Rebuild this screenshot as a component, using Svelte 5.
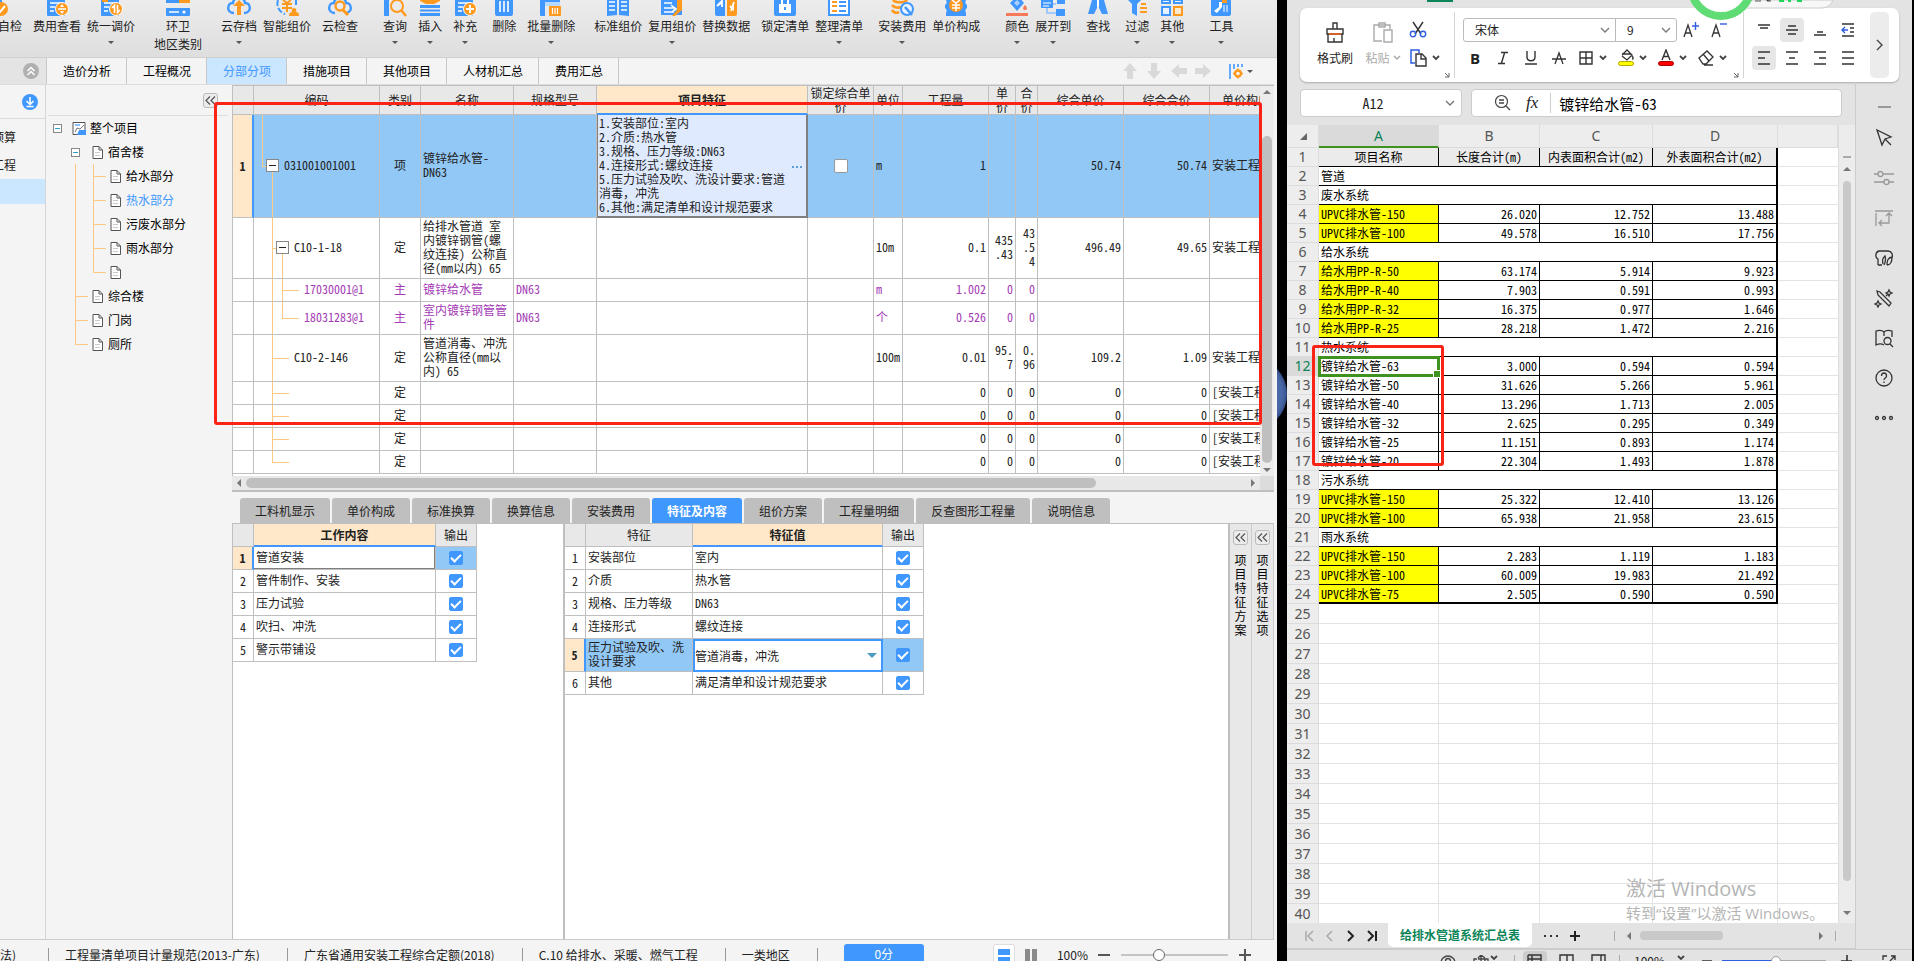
<script lang="ts">
  type Tool = {
    label: string;
    icon: string;
    gap: string;
    menu?: boolean;
    sub?: string;
  };

  const B = "#4098ff";
  const O = "#ff9a1f";

  const page = `<path fill="${B}" d="M2 0h18v15a1 1 0 0 1-1 1H3a1 1 0 0 1-1-1z"/><path stroke="#fff" stroke-width="1.5" d="M5 3h11M5 7h5M5 11h4"/>`;
  const badge = `<circle cx="17" cy="9" r="6.5" fill="${O}" stroke="#fff"/>`;
  const cloud = `<path fill="none" stroke="${B}" stroke-width="2.4" d="M7 13C2 13 0 9 2 5c1-2 3-2 4-2 0-2 1-3 2-4M17 13c5 0 7-4 5-8-1-2-3-2-4-2 0-2-1-3-2-4"/>`;

  const icons: Record<string, string> = {
    check: `<path fill="${B}" d="M0 0h16v15H0z"/><circle cx="15" cy="9" r="7" fill="${O}"/><path fill="none" stroke="#fff" stroke-width="2" d="m11 9 3 3 5-6"/>`,
    cost: `${page}${badge}<path stroke="#fff" stroke-width="1.5" d="M13 9h8"/><path fill="#fff" d="m17 4 2 3h-4zM17 14l2-3h-4z"/>`,
    unify: `${page}<path fill="${O}" d="M3 0h6v2H3z"/>${badge}<path fill="none" stroke="#fff" stroke-width="1.6" d="M15.500 13V5.500L13 8M18.500 5v7.500L21 10"/>`,
    region: `<path fill="${B}" d="M0 0h24v3H0zM0 8h24v7a1 1 0 0 1-1 1H1a1 1 0 0 1-1-1z"/><path fill="${O}" d="M13 0h11v3H13z"/><path stroke="#fff" stroke-width="1.500" d="M3 12h10"/><circle cx="18" cy="12" r="1.600" fill="#fff"/>`,
    cloudUp: `${cloud}<path fill="${O}" d="m12 0 6 6h-4v9h-4V6H6z"/>`,
    smart: `<path fill="none" stroke="${B}" stroke-width="2" stroke-dasharray="6 2" d="M3 0c-2 6 1 12 7 14M21 0v5"/><path fill="none" stroke="${O}" stroke-width="2" d="m8 0 4 3 4-3M12 2v10M7 4h10M7 8h10"/><path fill="${O}" d="M14 16c0-3 1-4 3-4-1-2 0-4 2-4s3 2 2 4c2 0 3 1 3 4z"/>`,
    cloudFind: `${cloud}<circle cx="12" cy="6" r="4.500" fill="none" stroke="${O}" stroke-width="2.400"/><path stroke="${O}" stroke-width="3" d="m15 10 5 5"/>`,
    query: `<path fill="${B}" d="M1 0h5v16H1z"/><circle cx="14" cy="6" r="6" fill="none" stroke="${O}" stroke-width="2"/><path stroke="${O}" stroke-width="2.500" d="m18 10 5 6"/>`,
    insert: `<path fill="${O}" d="M2 0h20v1l-6 3H8L2 1z"/><path stroke="${B}" stroke-width="3" d="M2 6.500h20M2 14.500h20"/><path stroke="${B}" stroke-width="2" d="M2 10.500h20"/>`,
    supply: `${page}${badge}<path stroke="#fff" stroke-width="1.800" d="M17 5v8M13 9h8"/>`,
    remove: `<path fill="${B}" d="M3 0h18v14a2 2 0 0 1-2 2H5a2 2 0 0 1-2-2z"/><path stroke="#fff" stroke-width="1.600" d="M8 1v11M12 1v11M16 1v11"/>`,
    removeAll: `<path fill="${B}" d="M1 0h20v2H6v14H2a1 1 0 0 1-1-1z"/><path fill="#b7d8ff" d="M6 2h15v4H6z"/><path fill="${O}" d="M10 6h12v9a1 1 0 0 1-1 1H11a1 1 0 0 1-1-1z"/><path stroke="#fff" stroke-width="1.200" d="M13.500 8v6M16 8v6M18.500 8v6"/>`,
    standard: `<path fill="${B}" d="M1 0h10v15l-10 1zM13 0h10v16l-10-1z"/><path stroke="#fff" stroke-width="1.300" d="M3 2h6M3 6h6M3 10h6M15 2h6M15 6h6M15 10h6"/>`,
    reuse: `<path fill="${B}" d="M1 0h16v4l5 5v6H2a1 1 0 0 1-1-1z"/><path fill="${O}" d="M17 0h5v10l-7 6h-3l5-6z"/><path fill="none" stroke="#fff" stroke-width="1.600" d="M4 3h8M4 12h10M11 5l5 4-4 3M4 8h11"/>`,
    swap: `<path fill="${B}" d="M1 0h10v16H3a2 2 0 0 1-2-2z"/><path fill="${O}" d="M13 0h10v14a2 2 0 0 1-2 2h-8z"/><path fill="none" stroke="#fff" stroke-width="1.800" d="m5 5 3-4v6M3 6l5-5M19 4v5l-3-3M20 2l-3 9"/>`,
    lock: `<path fill="${B}" d="M1 0h22v14a2 2 0 0 1-2 2H3a2 2 0 0 1-2-2z"/><path fill="#fff" d="M6 4h12v9H6z"/><path fill="none" stroke="#fff" stroke-width="2" d="M9 4V0M15 4V0"/><path stroke="${B}" stroke-width="2" d="M12 7v3"/>`,
    tidy: `<path fill="#fff" stroke="${B}" stroke-width="2" d="M2 0v15h20V0"/><path stroke="${O}" stroke-width="2" d="M5 2h5M5 6h5M5 11h5"/><path stroke="${B}" stroke-width="2" d="M12 2h7M12 6h7M12 11h7"/>`,
    install: `<path fill="none" stroke="${O}" stroke-width="2.600" d="M3 0c2 3 12 3 14 0M2 5c2 3 7 3 9 2M2 10c2 3 5 3 7 2"/><circle cx="17" cy="9" r="6" fill="#e6f2ff" stroke="${B}" stroke-width="2"/><path stroke="${B}" stroke-width="2.600" d="m15 7 7 8"/>`,
    compose: `<path fill="${B}" d="M1 5c2-1 2-3 1-5h20c-1 2-1 4 1 5v3c-2 1-2 3-1 5v3H2v-3c1-2 1-4-1-5z"/><circle cx="12" cy="5" r="7" fill="${O}"/><path fill="none" stroke="#fff" stroke-width="1.500" d="m8 0 4 3 4-3M12 3v8M8 5h8M8 8h8"/>`,
    color: `<path fill="#f7795b" d="M1 13h22v3H1z"/><path fill="${B}" d="M5 3 10-2h5l4 5-7 8z"/><path fill="#a7d0ff" d="m9 3 3-3 3 3-3 3z"/><path fill="#f7795b" d="M20 5c3 3 2 5 0 5s-3-2 0-5z"/>`,
    expand: `<path fill="${B}" d="M0 0h12v8H0zM16 0h8v4h-8zM15 9h9v7h-9z"/><path fill="none" stroke="#8cc0ff" stroke-width="1.600" d="M12 4h3M6 8v5h9"/><path stroke="#fff" d="M2 3h8M2 6h6"/>`,
    find: `<path fill="${B}" d="M6 0h5v8l-3 6H2zM13 0h5l4 14h-6l-3-6z"/><path fill="#fff" d="M11 0h2v6h-2z"/>`,
    filter: `<path fill="${B}" d="M3 0h13l-4 4v12l-5-3V4z"/><path stroke="${O}" stroke-width="2" d="M16 4h5M15 8h7M15 12h7"/>`,
    other: `<path fill="#e6f2ff" stroke="${B}" stroke-width="2" d="M2 0h8v3H2zM2 7h8v8H2zM14 0h8v3h-8z"/><path fill="#ffe9cd" stroke="${O}" stroke-width="2" d="M14 7h8v8h-8z"/>`,
    kit: `<path fill="${B}" d="M2 0h20v14a2 2 0 0 1-2 2H4a2 2 0 0 1-2-2z"/><path fill="#fff" d="M10 2h3v5l-5 6-3-2 5-4z"/><path fill="${O}" d="M13 0h5v3h-5z"/><path stroke="#fff" d="M15 5v7M18 5v7"/>`,
  };

  const tools: Tool[] = [
    { label: "项目自检", icon: "check", gap: "none" },
    { label: "费用查看", icon: "cost", gap: "gap-m" },
    { label: "统一调价", icon: "unify", gap: "gap-s", menu: true },
    { label: "环卫", sub: "地区类别", icon: "region", gap: "gap-xl" },
    { label: "云存档", icon: "cloudUp", gap: "gap-xl", menu: true },
    { label: "智能组价", icon: "smart", gap: "gap-s" },
    { label: "云检查", icon: "cloudFind", gap: "gap-m" },
    { label: "查询", icon: "query", gap: "gap-xxl", menu: true },
    { label: "插入", icon: "insert", gap: "gap-m", menu: true },
    { label: "补充", icon: "supply", gap: "gap-m", menu: true },
    { label: "删除", icon: "remove", gap: "gap-l" },
    { label: "批量删除", icon: "removeAll", gap: "gap-m", menu: true },
    { label: "标准组价", icon: "standard", gap: "gap-xl" },
    { label: "复用组价", icon: "reuse", gap: "gap-s", menu: true },
    { label: "替换数据", icon: "swap", gap: "gap-s" },
    { label: "锁定清单", icon: "lock", gap: "gap-m" },
    { label: "整理清单", icon: "tidy", gap: "gap-s", menu: true },
    { label: "安装费用", icon: "install", gap: "gap-l", menu: true },
    { label: "单价构成", icon: "compose", gap: "gap-s" },
    { label: "颜色", icon: "color", gap: "gap-xxl", menu: true },
    { label: "展开到", icon: "expand", gap: "gap-s", menu: true },
    { label: "查找", icon: "find", gap: "gap-l" },
    { label: "过滤", icon: "filter", gap: "gap-l", menu: true },
    { label: "其他", icon: "other", gap: "gap-m", menu: true },
    { label: "工具", icon: "kit", gap: "gap-xxl", menu: true },
  ];

  const mainTabs = ["造价分析", "工程概况", "分部分项", "措施项目", "其他项目", "人材机汇总", "费用汇总"];
  const moveArrows = [
    "M7 0l7 8h-4v8H4V8H0z",
    "M7 16l7-8h-4V0H4v8H0z",
    "M0 8l8-7v4h8v6H8v4z",
    "M16 8L8 1v4H0v6h8v4z",
  ];

  const treeLeaves = ["给水部分", "热水部分", "污废水部分", "雨水部分", ""];
  const treeSiblings = ["综合楼", "门岗", "厕所"];

  const billHead = ["", "编码", "类别", "名称", "规格型号", "项目特征", "锁定综合单\n价", "单位", "工程量", "单\n价", "合\n价", "综合单价", "综合合价", "单价构成"];
  const billCols = [21, 126, 41, 93, 83, 211, 66, 29, 86, 27, 22, 86, 86, 86];

  const feature =
    "1.安装部位:室内\n2.介质:热水管\n3.规格、压力等级:DN63\n4.连接形式:螺纹连接\n5.压力试验及吹、洗设计要求:管道\n消毒，冲洗\n6.其他:满足清单和设计规范要求";

  // guides: [x, "top" | "bottom" | "full"], hook: [x, width]
  type Row = {
    kind: string;
    level: number;
    code: string;
    box?: boolean;
    guides: [number, string][];
    hook: [number, number];
    cells: string[];
  };
  const blank: string[] = ["定", "", "", "", "", "", "0", "0", "0", "0", "0", "[安装工程]"];
  const rows: Row[] = [
    { kind: "current", level: 1, code: "031001001001", box: true, guides: [[8, "top"], [18, "bottom"]], hook: [8, 5], cells: ["项", "镀锌给水管-\nDN63", "", feature, "", "m", "1", "", "", "50.74", "50.74", "安装工程"] },
    { kind: "", level: 2, code: "C10-1-18", box: true, guides: [[18, "full"], [28, "bottom"]], hook: [18, 5], cells: ["定", "给排水管道 室\n内镀锌钢管(螺\n纹连接) 公称直\n径(mm以内) 65", "", "", "", "10m", "0.1", "435\n.43", "43\n.5\n4", "496.49", "49.65", "安装工程"] },
    { kind: "material", level: 3, code: "17030001@1", guides: [[18, "full"], [28, "full"]], hook: [28, 17], cells: ["主", "镀锌给水管", "DN63", "", "", "m", "1.002", "0", "0", "", "", ""] },
    { kind: "material", level: 3, code: "18031283@1", guides: [[18, "full"], [28, "top"]], hook: [28, 17], cells: ["主", "室内镀锌钢管管\n件", "DN63", "", "", "个", "0.526", "0", "0", "", "", ""] },
    { kind: "", level: 2, code: "C10-2-146", guides: [[18, "full"]], hook: [18, 17], cells: ["定", "管道消毒、冲洗\n公称直径(mm以\n内) 65", "", "", "", "100m", "0.01", "95.\n7", "0.\n96", "109.2", "1.09", "安装工程"] },
    { kind: "", level: 2, code: "", guides: [[18, "full"]], hook: [18, 17], cells: blank },
    { kind: "", level: 2, code: "", guides: [[18, "full"]], hook: [18, 17], cells: blank },
    { kind: "", level: 2, code: "", guides: [[18, "full"]], hook: [18, 17], cells: blank },
    { kind: "", level: 2, code: "", guides: [[18, "top"]], hook: [18, 17], cells: blank },
  ];

  const cellClass = (i: number) => (i === 0 ? "mid" : i >= 6 && i <= 10 ? "num" : "");

  const detailTabs = ["工料机显示", "单价构成", "标准换算", "换算信息", "安装费用", "特征及内容", "组价方案", "工程量明细", "反查图形工程量", "说明信息"];
  const works = ["管道安装", "管件制作、安装", "压力试验", "吹扫、冲洗", "警示带铺设"];
  const features = [
    ["安装部位", "室内"],
    ["介质", "热水管"],
    ["规格、压力等级", "DN63"],
    ["连接形式", "螺纹连接"],
    ["压力试验及吹、洗\n设计要求", "管道消毒，冲洗"],
    ["其他", "满足清单和设计规范要求"],
  ];
  const drawers = ["项目特征方案", "项目特征选项"];
  const statusItems = ["工程量清单项目计量规范(2013-广东)", "广东省通用安装工程综合定额(2018)", "C.10 给排水、采暖、燃气工程", "一类地区"];

  const sheet: string[][] = [
    ["项目名称", "长度合计(m)", "内表面积合计(m2)", "外表面积合计(m2)"],
    ["管道"],
    ["废水系统"],
    ["UPVC排水管-150", "26.020", "12.752", "13.488"],
    ["UPVC排水管-100", "49.578", "16.510", "17.756"],
    ["给水系统"],
    ["给水用PP-R-50", "63.174", "5.914", "9.923"],
    ["给水用PP-R-40", "7.903", "0.591", "0.993"],
    ["给水用PP-R-32", "16.375", "0.977", "1.646"],
    ["给水用PP-R-25", "28.218", "1.472", "2.216"],
    ["热水系统"],
    ["镀锌给水管-63", "3.000", "0.594", "0.594"],
    ["镀锌给水管-50", "31.626", "5.266", "5.961"],
    ["镀锌给水管-40", "13.296", "1.713", "2.005"],
    ["镀锌给水管-32", "2.625", "0.295", "0.349"],
    ["镀锌给水管-25", "11.151", "0.893", "1.174"],
    ["镀锌给水管-20", "22.304", "1.493", "1.878"],
    ["污水系统"],
    ["UPVC排水管-150", "25.322", "12.410", "13.126"],
    ["UPVC排水管-100", "65.938", "21.958", "23.615"],
    ["雨水系统"],
    ["UPVC排水管-150", "2.283", "1.119", "1.183"],
    ["UPVC排水管-100", "60.009", "19.983", "21.492"],
    ["UPVC排水管-75", "2.505", "0.590", "0.590"],
  ];
  const emptyRows = Array.from({ length: 16 }, (_, i) => i + 25);
  const isMarked = (i: number, row: string[]) => i > 0 && row.length > 1 && !row[0].startsWith("镀锌");

  const railIcons = [
    { name: "选择", soft: false, d: "M3 2l5 15 3-6 6-2zM11 11l6 6" },
    { name: "属性", soft: true, d: "M0 6h4M9 6h11M0 14h10M15 14h5M4 6a2.500 2.500 0 1 0 5 0a2.500 2.500 0 1 0-5 0M10 14a2.500 2.500 0 1 0 5 0a2.500 2.500 0 1 0-5 0" },
    { name: "裁剪", soft: true, d: "M1 3h18M2 5v13M15 6v9H6M12 8l3-3 3 3M8 12l-3 3 3 3" },
    { name: "分析", soft: false, d: "M4 17V11C1 10 1 4 5 3h9c4 0 5 4 4 7M4 17h4M9 16c-1-5 0-6 2-8 1 3 1 5-1 9M13 17c0-5 1-7 5-8 0 4-1 8-5 8" },
    { name: "工具", soft: false, d: "M3 3l3 1 11 11-2 3L4 7zM15 2l1 2 2 1-2 1-1 2-1-2-2-1 2-1zM4 13l1 2 2 1-2 1-1 2-1-2-2-1 2-1zM12 8l2-2" },
    { name: "查找", soft: false, d: "M10 17c-3-2-6-1-8 0V3c3-1 6-1 8 1 2-2 5-2 8-1v6M10 4v4M17 13a3.500 3.500 0 1 0-7 0a3.500 3.500 0 1 0 7 0M16 16l3 3" },
    { name: "帮助", soft: false, d: "M18 10a8 8 0 1 0-16 0a8 8 0 1 0 16 0M7.500 8c0-4 5-4 5 0 0 2-2.500 2-2.500 4M10 13.500v1.500" },
    { name: "更多", soft: false, d: "M4.500 10a1.500 1.500 0 1 0-3 0a1.500 1.500 0 1 0 3 0M11.500 10a1.500 1.500 0 1 0-3 0a1.500 1.500 0 1 0 3 0M18.500 10a1.500 1.500 0 1 0-3 0a1.500 1.500 0 1 0 3 0" },
  ];
  const alignTop = [
    { name: "顶端对齐", on: false, d: "M4 5h12M6 8h8" },
    { name: "垂直居中", on: true, d: "M6 6h8M4 10h12M6 14h8" },
    { name: "底端对齐", on: false, d: "M7 12h6M4 15h12" },
  ];
  const alignBottom = [
    { name: "左对齐", on: true, d: "M4 4h12M4 10h7M4 16h12" },
    { name: "水平居中", on: false, d: "M4 4h12M7 10h6M4 16h12" },
    { name: "右对齐", on: false, d: "M4 4h12M9 10h7M4 16h12" },
    { name: "两端对齐", on: false, d: "M4 4h12M4 10h12M4 16h12" },
  ];
</script>

{#snippet doc()}
  <svg class="doc" width="11" height="13" viewBox="0 0 11 13">
    <path d="M1 .5h6l3.500 3.500v8.500H1z" fill="#fff" stroke="#555" />
    <path d="M7 .5V4h3.500" fill="none" stroke="#555" />
    <path d="M3 6.500h5M3 9.500h5" stroke="#c8c8c8" />
  </svg>
{/snippet}

{#snippet chevron()}
  <svg class="chev" width="10" height="6" viewBox="0 0 10 6"><path d="M1 1l4 4 4-4" fill="none" stroke="#777" stroke-width="1.300" /></svg>
{/snippet}

{#snippet doubleLeft()}
  <svg width="11" height="9" viewBox="0 0 11 9"><path d="M5 .5l-4 4 4 4M10 .5l-4 4 4 4" fill="none" stroke="#555" stroke-width="1.200" /></svg>
{/snippet}

{#snippet smallCaret()}
  <svg width="8" height="6" viewBox="0 0 8 6"><path d="M1 1l3 3 3-3" fill="none" stroke="#444" stroke-width="1.800" /></svg>
{/snippet}

<!-- keeps the comma at full width inside half-width text -->
{#snippet wide(text: string)}{#each text.split("，") as part, i}{#if i > 0}<span class="full-width">，</span>{/if}{part}{/each}{/snippet}

<div class="desktop">
  <div class="suite">
    <div class="toolbar">
      {#each tools as tool}
        <button class="tool {tool.gap}">
          <svg width="24" height="17" viewBox="0 0 24 17">{@html icons[tool.icon]}</svg>
          <span>{tool.label}</span>
          {#if tool.sub}<span>{tool.sub}</span>{/if}
          {#if tool.menu}<i class="caret"></i>{/if}
        </button>
      {/each}
    </div>

    <div class="main-tabs">
      <div class="fold">
        <button aria-label="收起">
          <svg width="16" height="16" viewBox="0 0 16 16"><circle cx="8" cy="8" r="8" fill="#b0b0b0" /><path d="M4.500 8L8 4.500 11.500 8M4.500 12L8 8.500l3.500 3.500" fill="none" stroke="#fff" stroke-width="1.500" /></svg>
        </button>
      </div>
      {#each mainTabs as tab}
        <button class="main-tab" class:active={tab === "分部分项"}>{tab}</button>
      {/each}
      <div class="moves">
        {#each moveArrows as d}
          <svg width="16" height="16" viewBox="0 0 16 16"><path {d} fill="#d9d9d9" /></svg>
        {/each}
      </div>
      <button class="config" aria-label="设置">
        <svg width="14" height="15" viewBox="0 0 14 15">
          <path d="M1 0v15M5 0v5M9 0v3M13 0v3" stroke="#4098ff" stroke-width="1.600" />
          <circle cx="9" cy="9.500" r="3" fill="none" stroke="#ff9a1f" stroke-width="2.400" />
          <path d="M9 4.500v10M4 9.500h10" stroke="#ff9a1f" stroke-width="1.600" stroke-dasharray="2 6" />
        </svg>
        <i class="caret"></i>
      </button>
    </div>

    <div class="workspace">
      <aside class="strip">
        <div class="strip-top">
          <svg width="16" height="16" viewBox="0 0 16 16"><circle cx="8" cy="8" r="8" fill="#4098ff" /><path d="M8 3v7M4.500 7L8 10.500 11.500 7M4.500 12.500h7" fill="none" stroke="#fff" stroke-width="1.500" /></svg>
        </div>
        <p>预算</p>
        <p>工程</p>
        <p class="picked"></p>
      </aside>

      <nav class="project">
        <div class="project-top"><button class="collapse" aria-label="折叠">{@render doubleLeft()}</button></div>
        <div class="node root">
          <i class="toggle"></i>
          <svg width="14" height="13" viewBox="0 0 14 13"><path d="M1 .5h12v12H1z" fill="#fff" stroke="#555" /><path d="M3 3h5" stroke="#8cc0ff" stroke-width="2" /><path d="M3 10l2-4 3 1 4-4" fill="none" stroke="#777" /><path d="M7 8h7v5H5z" fill="#4098ff" /></svg>
          <span>整个项目</span>
        </div>
        <div class="node level-one">
          <i class="toggle"></i>
          {@render doc()}
          <span>宿舍楼</span>
        </div>
        <div class="branch outer">
          <div class="branch inner">
            {#each treeLeaves as leaf}
              <div class="node leaf" class:chosen={leaf === "热水部分"}>
                {@render doc()}
                <span>{leaf}</span>
              </div>
            {/each}
          </div>
          {#each treeSiblings as name}
            <div class="node leaf">
              {@render doc()}
              <span>{name}</span>
            </div>
          {/each}
        </div>
      </nav>

      <main class="content">
        <section class="bill">
          <div class="bill-view">
            <table class="grid bill-grid">
              <colgroup>
                {#each billCols as w}<col style="width: {w}px" />{/each}
              </colgroup>
              <thead>
                <tr>
                  {#each billHead as h}
                    <th class:hot={h === "项目特征"}>{h}</th>
                  {/each}
                </tr>
              </thead>
              <tbody>
                {#each rows as row, r}
                  <tr class={row.kind}>
                    <td class="index">{r === 0 ? "1" : ""}</td>
                    <td class="code level-{row.level}">
                      {#each row.guides as [x, part]}
                        <i class="guide {part}" style="left: {x}px"></i>
                      {/each}
                      <i class="hook" style="left: {row.hook[0]}px; width: {row.hook[1]}px"></i>
                      {#if row.box}<i class="minus" style="left: {row.hook[0] + 4}px"></i>{/if}
                      {row.code}
                    </td>
                    {#each row.cells as cell, i}
                      <td class={cellClass(i)} class:feature={r === 0 && i === 3} class:mid={i === 0 || (r === 0 && i === 4)}>
                        {#if r === 0 && i === 4}
                          <input type="checkbox" class="check" aria-label="锁定综合单价" />
                        {:else}{@render wide(cell)}{/if}{#if r === 0 && i === 3}<button class="more" aria-label="编辑特征"><i></i><i></i><i></i></button>{/if}
                      </td>
                    {/each}
                  </tr>
                {/each}
              </tbody>
            </table>
          </div>
          <div class="vbar">
            <i class="arrow up"></i>
            <i class="thumb"></i>
            <i class="arrow down"></i>
          </div>
          <div class="marker bill-marker"></div>
        </section>
        <div class="hbar">
          <i class="arrow left"></i>
          <div class="track"><i class="thumb"></i></div>
          <i class="arrow right"></i>
          <i class="corner"></i>
        </div>

        <div class="detail-tabs">
          {#each detailTabs as tab}
            <button class="detail-tab" class:active={tab === "特征及内容"}>{tab}</button>
          {/each}
        </div>

        <section class="detail">
          <div class="works">
            <table class="grid">
              <colgroup><col class="w-index" /><col class="w-work" /><col class="w-out" /></colgroup>
              <thead><tr><th></th><th class="hot">工作内容</th><th>输出</th></tr></thead>
              <tbody>
                {#each works as work, i}
                  <tr class:current={i === 0}>
                    <td class="index">{i + 1}</td>
                    <td class:focus={i === 0}>{work}</td>
                    <td class="mid"><input type="checkbox" class="check" checked aria-label={work} /></td>
                  </tr>
                {/each}
              </tbody>
            </table>
          </div>
          <div class="values">
            <table class="grid">
              <colgroup><col class="w-index" /><col class="w-name" /><col class="w-value" /><col class="w-out" /></colgroup>
              <thead><tr><th></th><th>特征</th><th class="hot">特征值</th><th>输出</th></tr></thead>
              <tbody>
                {#each features as [name, value], i}
                  <tr class:current={i === 4}>
                    <td class="index">{i + 1}</td>
                    <td>{name}</td>
                    {#if i === 4}
                      <td class="editing">
                        <div class="picker">
                          <select aria-label={name}><option>{value}</option></select>
                          <i></i>
                        </div>
                      </td>
                    {:else}
                      <td>{value}</td>
                    {/if}
                    <td class="mid"><input type="checkbox" class="check" checked aria-label={name} /></td>
                  </tr>
                {/each}
              </tbody>
            </table>
          </div>
          {#each drawers as drawer}
            <div class="drawer">
              <button class="collapse" aria-label="展开{drawer}">{@render doubleLeft()}</button>
              <span>{drawer}</span>
            </div>
          {/each}
        </section>
      </main>
    </div>

    <footer class="status">
      <span class="first">法)</span>
      {#each statusItems as item}<span>{item}</span>{/each}
      <button class="score">0分</button>
      <svg class="views" width="46" height="17" viewBox="0 0 46 17">
        <rect x=".5" y=".5" width="21" height="24" rx="2" fill="#fff" stroke="#ddd" />
        <path d="M5 5h12v6H5zM5 13h12v7H5z" fill="#4098ff" />
        <path d="M32 5h5v15h-5zM39 5h5v15h-5z" fill="#8a8a8a" />
      </svg>
      <b class="percent">100%</b>
      <svg width="154" height="18" viewBox="0 0 154 18">
        <path d="M0 12h12M141 12h12M147 6v12" stroke="#555" stroke-width="2" />
        <path d="M23 12h107" stroke="#c4c4c4" stroke-width="2" />
        <circle cx="61" cy="12" r="5.500" fill="#fff" stroke="#666" />
      </svg>
    </footer>
  </div>

  <div class="gutter"><i></i></div>

  <div class="office">
    <div class="overlay">
      <i class="green-tab"></i>
      <svg class="speed" width="150" height="24" viewBox="0 0 150 24">
        <path d="M30 0h116c-2 5-6 8-12 8H30z" fill="#f7f7f7" stroke="#ccc" />
        <path d="M64 0v1M68 1h6M80 0v1h4" stroke="#555" />
        <path d="M92 1h5M101 1h3M110 1h5" stroke="#1fd65a" stroke-width="2" />
        <circle cx="34" cy="-14" r="30" fill="#fff" stroke="#5fdc74" stroke-width="8" />
      </svg>
    </div>

    <div class="ribbon">
      <div class="clip">
        <button class="big">
          <svg width="20" height="22" viewBox="0 0 20 22"><path d="M8 8V2h4v6M2 8h16v5H2zM3 13v8h14v-8M9 17v4" fill="none" stroke="#333" stroke-width="1.400" /><path d="M4 13h12" stroke="#d2622a" stroke-width="2" /></svg>
          <span>格式刷</span>
        </button>
        <button class="big soft">
          <svg width="20" height="22" viewBox="0 0 20 22"><path d="M9 20H1V4h16v4M6 6V2h6v4zM11 9h8v12h-8z" fill="none" stroke="#aaa" stroke-width="1.400" /></svg>
          <span>粘贴 <svg width="8" height="6" viewBox="0 0 8 6"><path d="M1 1l3 3 3-3" fill="none" stroke="#aaa" stroke-width="1.500" /></svg></span>
        </button>
        <div class="pair">
          <button aria-label="剪切"><svg width="18" height="18" viewBox="0 0 18 18"><path d="M4 1l8 12M14 1L6 13" fill="none" stroke="#333" stroke-width="1.400" /><g fill="none" stroke="#2f5fe0" stroke-width="1.400"><circle cx="4" cy="13" r="2.700" /><circle cx="14" cy="13" r="2.700" /></g></svg></button>
          <button aria-label="复制"><svg width="18" height="18" viewBox="0 0 18 18"><path d="M6 14H2V1h8v3" fill="none" stroke="#2f5fe0" stroke-width="1.500" /><path d="M7 5h6l4 4v8H7zM12 5v5h5" fill="none" stroke="#333" stroke-width="1.400" /></svg>{@render smallCaret()}</button>
        </div>
        <svg class="launch" width="6" height="6" viewBox="0 0 6 6"><path d="M1 1l4 4M5 1v4H1" fill="none" stroke="#666" /></svg>
      </div>

      <div class="font">
        <div class="line">
          <div class="combo">
            <select class="family" aria-label="字体"><option>宋体</option></select>{@render chevron()}
          </div>
          <div class="combo size">
            <select aria-label="字号"><option>9</option></select>{@render chevron()}
          </div>
          <button class="step" aria-label="增大字号"><svg width="18" height="18" viewBox="0 0 18 18"><path d="M2 16L6 4l4 12M3.500 12h5" fill="none" stroke="#333" stroke-width="1.300" /><path d="M13.500 1v8M10 5h7" stroke="#2f5fe0" stroke-width="1.400" /></svg></button>
          <button class="step" aria-label="减小字号"><svg width="18" height="18" viewBox="0 0 18 18"><path d="M2 16L6 4l4 12M3.500 12h5" fill="none" stroke="#333" stroke-width="1.300" /><path d="M10 3h7" stroke="#2f5fe0" stroke-width="1.400" /></svg></button>
        </div>
        <div class="line">
          <button class="glyph bold">B</button>
          <button class="glyph" aria-label="倾斜"><svg width="14" height="14" viewBox="0 0 14 14"><path d="M5 1.500h7M2 12.500h7M8.500 2L5.500 12" stroke="#333" stroke-width="1.400" /></svg></button>
          <button class="glyph" aria-label="下划线"><svg width="14" height="14" viewBox="0 0 14 14"><path d="M3 0v6c0 5 8 5 8 0V0M1 13h12" fill="none" stroke="#333" stroke-width="1.400" /></svg></button>
          <button class="glyph" aria-label="删除线"><svg width="14" height="14" viewBox="0 0 14 14"><path d="M3 13L7 2l4 11M0 8h14" fill="none" stroke="#333" stroke-width="1.300" /></svg></button>
          <button class="split" aria-label="边框"><svg width="26" height="16" viewBox="0 0 26 16"><path d="M7 2h12v12H7zM13 2v12M7 8h12" fill="none" stroke="#333" stroke-width="1.400" /></svg>{@render smallCaret()}</button>
          <button class="split" aria-label="填充颜色"><svg width="26" height="18" viewBox="0 0 26 18"><path d="M9 6l5-5 5 5-5 5-5-4M9 5h9M19 7c2 2 1 3 0 3" fill="none" stroke="#333" stroke-width="1.300" /><rect x="5.500" y="12.500" width="15" height="4" rx="2" fill="#ff0" stroke="#b8a800" /></svg>{@render smallCaret()}</button>
          <button class="split" aria-label="字体颜色"><svg width="26" height="18" viewBox="0 0 26 18"><path d="M9 11l4-10 4 10M10.500 7.500h5" fill="none" stroke="#333" stroke-width="1.400" /><rect x="5.500" y="12.500" width="15" height="4" rx="2" fill="#f00" stroke="#a00" /></svg>{@render smallCaret()}</button>
          <button class="split" aria-label="清除"><svg width="26" height="18" viewBox="0 0 26 18"><path d="M6 9l8-7 6 6-7 7h-3zM10 5l6 7M11 16h9" fill="none" stroke="#333" stroke-width="1.300" /></svg>{@render smallCaret()}</button>
        </div>
        <svg class="launch" width="6" height="6" viewBox="0 0 6 6"><path d="M1 1l4 4M5 1v4H1" fill="none" stroke="#666" /></svg>
      </div>

      <div class="align">
        <div class="line">
          {#each alignTop as a}
            <button class:on={a.on} aria-label={a.name}><svg width="20" height="20" viewBox="0 0 20 20"><path d={a.d} stroke="#333" stroke-width="1.400" /></svg></button>
          {/each}
          <button aria-label="减少缩进"><svg width="20" height="20" viewBox="0 0 20 20"><path d="M4 4h12M12 8h4M12 12h4M4 16h12" stroke="#333" stroke-width="1.400" /><path d="M10 10H4M7 7l-3 3 3 3" fill="none" stroke="#2f5fe0" stroke-width="1.400" /></svg></button>
        </div>
        <div class="line">
          {#each alignBottom as a}
            <button class:on={a.on} aria-label={a.name}><svg width="20" height="20" viewBox="0 0 20 20"><path d={a.d} stroke="#333" stroke-width="1.400" /></svg></button>
          {/each}
        </div>
      </div>
      <button class="next" aria-label="更多"><svg width="8" height="14" viewBox="0 0 8 14"><path d="M1 2l5 5-5 5" fill="none" stroke="#444" stroke-width="1.400" /></svg></button>
    </div>

    <div class="book">
      <div class="book-main">
        <div class="formula-row">
          <div class="name-box">
            <input aria-label="名称框" value="A12" />
            {@render chevron()}
          </div>
          <div class="formula">
            <svg width="18" height="18" viewBox="0 0 18 18"><circle cx="7.500" cy="7.500" r="6" fill="none" stroke="#444" stroke-width="1.200" /><path d="M12 12l4 4M5 6h5M5 9h5" stroke="#444" stroke-width="1.300" /></svg>
            <em>fx</em>
            <input aria-label="编辑栏" value="镀锌给水管-63" />
          </div>
        </div>

        <div class="sheet-wrap">
          <div class="sheet-view">
            <table class="sheet">
              <colgroup><col class="c-head" /><col class="c-a" /><col class="c-b" /><col class="c-c" /><col class="c-d" /><col /></colgroup>
              <thead>
                <tr><th class="all"><i></i></th><th class="picked">A</th><th>B</th><th>C</th><th>D</th><th></th></tr>
              </thead>
              <tbody>
                {#each sheet as row, i}
                  <tr class:title={i === 0} class:last={i === sheet.length - 1}>
                    <th class:picked={i === 11}>{i + 1}</th>
                    {#if row.length === 1}
                      <td class="data edge" colspan="4">{row[0]}</td>
                    {:else}
                      {#each row as cell, c}
                        <td class="data" class:num={i > 0 && c > 0} class:edge={c === 3} class:yellow={c === 0 && isMarked(i, row)} class:cursor={i === 11 && c === 0}>{cell}</td>
                      {/each}
                    {/if}
                    <td></td>
                  </tr>
                {/each}
                {#each emptyRows as n}
                  <tr class="spare"><th>{n}</th><td></td><td></td><td></td><td></td><td></td></tr>
                {/each}
              </tbody>
            </table>
          </div>
          <div class="sheet-bar">
            <i class="dash"></i>
            <i class="arrow up"></i>
            <i class="thumb"></i>
            <i class="arrow down"></i>
          </div>
          <div class="marker sheet-marker"></div>
          <div class="watermark">
            <p>激活 Windows</p>
            <p>转到“设置”以激活 Windows。</p>
          </div>
        </div>

        <div class="sheet-tabs">
          <svg width="84" height="14" viewBox="0 0 84 14">
            <path d="M2 2v10M9 2L4 7l5 5M28 2l-5 5 5 5" fill="none" stroke="#aaa" stroke-width="1.500" />
            <path d="M44 2l5 5-5 5M64 2l5 5-5 5M72 2v10" fill="none" stroke="#222" stroke-width="2" />
          </svg>
          <button class="sheet-tab">给排水管道系统汇总表</button>
          <button class="dots" aria-label="更多工作表"><svg width="14" height="2" viewBox="0 0 14 2"><path d="M0 1h2M6 1h2M12 1h2" stroke="#333" stroke-width="2" /></svg></button>
          <button class="plus" aria-label="新建工作表"><svg width="10" height="10" viewBox="0 0 10 10"><path d="M5 0v10M0 5h10" stroke="#222" stroke-width="2" /></svg></button>
          <div class="sheet-scroll">
            <i class="arrow left"></i>
            <i class="thumb"></i>
            <i class="arrow right"></i>
          </div>
        </div>
      </div>

      <aside class="rail">
        <i class="dash"></i>
        {#each railIcons as icon}
          <button aria-label={icon.name} class:soft={icon.soft}><svg width="20" height="20" viewBox="0 0 20 20"><path d={icon.d} fill="none" stroke="currentColor" stroke-width="1.300" /></svg></button>
        {/each}
      </aside>
    </div>

    <footer class="office-status">
      <svg width="50" height="20" viewBox="0 0 50 20"><g fill="none" stroke="#444" stroke-width="1.300"><circle cx="8" cy="8" r="7" /><circle cx="8" cy="6" r="2.500" /><path d="M41 0v6M37 4h-3v8M45 4h3v8M38 4h7v6M38 3l3-3 4 3" /></g></svg>
      {@render smallCaret()}
      <i class="bar"></i>
      <button class="view on" aria-label="普通视图"><svg width="16" height="14" viewBox="0 0 16 14"><path d="M1 1h13v13M1 1v13M1 5h13M5 1v13M1 9h13" fill="none" stroke="#333" stroke-width="1.400" /></svg></button>
      <button class="view" aria-label="页面布局"><svg width="16" height="14" viewBox="0 0 16 14"><path d="M1 1h13v13H1zM8 1v13" fill="none" stroke="#333" stroke-width="1.400" /></svg></button>
      <button class="view" aria-label="分页预览"><svg width="16" height="14" viewBox="0 0 16 14"><path d="M1 1h9v13H1zM10 1h4v11" fill="none" stroke="#333" stroke-width="1.400" /></svg></button>
      <i class="bar"></i>
      <span>100%</span>
      {@render smallCaret()}
      <svg class="zoom" width="150" height="14" viewBox="0 0 150 14"><path d="M0 6h10M139 6h12M145 0v12" stroke="#333" stroke-width="1.600" /><path d="M74 6h50" stroke="#aaa" stroke-width="2" /><path d="M20 6h54" stroke="#2f5fe0" stroke-width="2" /><circle cx="74" cy="6" r="4.500" fill="#fff" stroke="#999" /></svg>
      <svg width="14" height="14" viewBox="0 0 14 14"><path d="M1 5V1h4M8 6l5-5M9 1h4v4" fill="none" stroke="#333" stroke-width="1.300" /></svg>
    </footer>
  </div>
</div>

<style>
  :global(body) {
    background: #000;
  }
  * {
    box-sizing: border-box;
  }
  button,
  input,
  select {
    margin: 0;
    padding: 0;
    border: 0;
    background: none;
    color: inherit;
    font: inherit;
  }
  select {
    appearance: none;
  }
  p {
    margin: 0;
  }
  svg {
    display: block;
    flex: none;
  }

  .desktop {
    display: grid;
    grid-template-columns: minmax(0, 1fr) 10px 627px;
    height: 100vh;
    overflow: hidden;
    font: 12px/14px "Noto Sans CJK SC", "Liberation Sans", sans-serif;
    color: #222;
  }

  /* costing suite */
  .suite {
    display: flex;
    flex-direction: column;
    min-width: 0;
    height: 100vh;
    padding-right: 3px;
    background: #f4f4f4;
  }
  .toolbar {
    display: flex;
    flex: none;
    height: 58px;
    margin-right: -3px;
    padding-right: 3px;
    overflow: hidden;
    background: linear-gradient(#ececec, #dedede);
    border-bottom: 1px solid #cfcfcf;
  }
  .tool {
    display: flex;
    flex: none;
    flex-direction: column;
    align-items: center;
    justify-content: flex-start;
    line-height: 18px;
    white-space: nowrap;
  }
  .tool:first-child {
    margin-left: -26px;
  }
  .tool .caret {
    margin-top: 6px;
  }
  .gap-s {
    margin-left: 6px;
  }
  .gap-m {
    margin-left: 11px;
  }
  .gap-l {
    margin-left: 15px;
  }
  .gap-xl {
    margin-left: 19px;
  }
  .gap-xxl {
    margin-left: 25px;
  }
  .caret {
    border: 3px solid transparent;
    border-top-color: #555;
    border-bottom: 0;
  }

  .main-tabs {
    display: flex;
    flex: none;
    height: 27px;
    border-bottom: 1px solid #dcdcdc;
    color: #000;
  }
  .fold {
    display: flex;
    align-items: center;
    width: 47px;
    padding-left: 23px;
    background: #e4e4e4;
    border-right: 1px solid #c8c8c8;
  }
  .main-tab {
    padding: 0 15px 0 16px;
    border-right: 1px solid #c8c8c8;
  }
  .main-tab.active {
    background: #cbe6ff;
    color: #4098ff;
  }
  .moves {
    display: flex;
    align-items: center;
    gap: 8px;
    margin-left: auto;
  }
  .config {
    display: flex;
    align-items: center;
    gap: 4px;
    margin: 0 21px 0 18px;
  }

  .workspace {
    display: flex;
    flex: 1;
    min-height: 0;
    border-bottom: 1px solid #ccc;
  }
  .strip {
    flex: none;
    width: 46px;
    overflow: hidden;
    border-right: 1px solid #d5d5d5;
  }
  .strip-top {
    display: flex;
    align-items: center;
    height: 34px;
    margin-bottom: 4px;
    padding-left: 22px;
    border-bottom: 1px solid #ddd;
  }
  .strip p {
    height: 28px;
    margin-left: -8px;
    line-height: 28px;
  }
  .strip .picked {
    height: 25px;
    background: #cbe6ff;
  }

  .project {
    flex: none;
    width: 186px;
    padding: 0 4px 0 2px;
    color: #000;
  }
  .project-top {
    display: flex;
    align-items: center;
    justify-content: flex-end;
    height: 31px;
    padding-right: 10px;
    border-bottom: 1px solid #dcdcdc;
  }
  .collapse {
    display: grid;
    place-items: center;
    width: 15px;
    height: 15px;
    border: 1px solid #bbb;
    border-radius: 3px;
    background: #ececec;
  }
  .node {
    display: flex;
    align-items: center;
    height: 24px;
  }
  .root {
    padding-left: 5px;
  }
  .root svg {
    margin: 0 4px 0 10px;
  }
  .level-one {
    padding-left: 23px;
  }
  .level-one .doc {
    margin-left: 12px;
  }
  .doc {
    margin-right: 5px;
  }
  .toggle {
    display: grid;
    place-items: center;
    width: 9px;
    height: 9px;
    border: 1px solid #888;
    background: #fff;
  }
  .toggle::after {
    content: "";
    width: 5px;
    height: 1px;
    background: #2a9fd0;
  }
  .branch {
    position: relative;
  }
  .outer {
    margin-left: 27px;
  }
  .inner {
    margin-left: 18px;
  }
  .leaf {
    position: relative;
    padding-left: 17px;
  }
  /* connector: vertical run plus a hook into each node */
  .branch > .leaf::before,
  .outer > .inner::before {
    content: "";
    position: absolute;
    top: 0;
    left: 0;
    width: 1px;
    height: 100%;
    background: #ffc883;
  }
  .outer > .inner::before {
    left: -18px;
  }
  .branch > .leaf:last-child::before {
    height: 50%;
  }
  .leaf::after {
    content: "";
    position: absolute;
    top: 50%;
    left: 0;
    width: 13px;
    height: 1px;
    background: #ffc883;
  }
  .chosen {
    color: #4098ff;
  }

  .content {
    display: flex;
    flex: 1;
    flex-direction: column;
    min-width: 0;
  }
  .bill {
    position: relative;
    display: flex;
    flex: none;
    border-top: 1px solid #bfbfbf;
    border-left: 1px solid #bfbfbf;
  }
  .bill-view {
    flex: 1;
    min-width: 0;
    padding-bottom: 2px;
    overflow: hidden;
    background: #fff;
  }
  .grid {
    width: 0;
    border-spacing: 0;
    table-layout: fixed;
    background: #fff;
    font-feature-settings: "hwid" 1;
    white-space: pre;
  }
  .full-width,
  .picker select {
    font-feature-settings: normal;
  }
  .grid th,
  .grid td {
    height: 23px;
    padding: 1px 2px 3px;
    overflow: hidden;
    border-right: 1px solid #bfbfbf;
    border-bottom: 1px solid #bfbfbf;
    text-align: left;
  }
  .grid th {
    padding: 0;
    background: #e8e8e8;
    font-weight: 400;
    text-align: center;
  }
  .bill-grid th {
    height: 29px;
  }
  .bill-grid th:last-child {
    padding-left: 12px;
    text-align: left;
  }
  .grid .hot {
    background: #ffe7c9;
    border-bottom: 2px solid #4098ff;
    font-weight: 700;
  }
  .grid .index {
    padding: 0;
    text-align: center;
  }
  .grid .mid {
    text-align: center;
  }
  .grid .num {
    text-align: right;
  }
  .current td {
    background: #92c8f6;
  }
  .grid .current .index {
    background: #ffe7c9;
    border-right: 2px solid #4098ff;
    font-weight: 700;
  }
  .material {
    color: #a33bb5;
  }
  .grid .code {
    position: relative;
  }
  .grid .level-1 {
    padding-left: 30px;
  }
  .grid .level-2 {
    padding-left: 40px;
  }
  .grid .level-3 {
    padding-left: 50px;
  }
  .code {
    white-space: normal;
  }
  .guide,
  .hook {
    position: absolute;
    background: #ffc883;
  }
  .guide {
    width: 1px;
  }
  .guide.full {
    top: 0;
    bottom: -1px;
  }
  .guide.top {
    top: 0;
    bottom: 50%;
  }
  .guide.bottom {
    top: 50%;
    bottom: -1px;
  }
  .hook {
    top: 50%;
    height: 1px;
  }
  .minus {
    position: absolute;
    top: calc(50% - 7px);
    display: grid;
    place-items: center;
    width: 13px;
    height: 13px;
    border: 1px solid #888;
    background: #fff;
  }
  .minus::after {
    content: "";
    width: 7px;
    height: 1px;
    background: #222;
  }
  .grid .feature {
    position: relative;
    padding-bottom: 2px;
    background: #dfeaff;
    border-right: 2px solid #7f7f7f;
    border-bottom: 2px solid #7f7f7f;
    box-shadow: inset 1px 0 #7f7f7f;
  }
  .more {
    position: absolute;
    top: 50%;
    right: 4px;
    display: flex;
    gap: 2px;
  }
  .more i {
    width: 2px;
    height: 2px;
    background: #5a9fd8;
  }
  .check {
    display: inline-grid;
    place-items: center;
    width: 14px;
    height: 14px;
    appearance: none;
    border: 1px solid #999;
    border-radius: 2px;
    background: #fff;
    vertical-align: middle;
  }
  .check:checked {
    border-color: #4098ff;
    background: #4098ff;
  }
  .check:checked::after {
    content: "";
    width: 8px;
    height: 4px;
    margin-bottom: 2px;
    border: solid #fff;
    border-width: 0 0 2px 2px;
    transform: rotate(-45deg);
  }

  .arrow {
    width: 0;
    height: 0;
    border: 4px solid transparent;
  }
  .arrow.up {
    border-top: 0;
    border-bottom-color: #777;
  }
  .arrow.down {
    border-bottom: 0;
    border-top-color: #777;
  }
  .arrow.left {
    border-left: 0;
    border-right-color: #777;
  }
  .arrow.right {
    border-right: 0;
    border-left-color: #777;
  }
  .vbar {
    display: flex;
    flex: none;
    flex-direction: column;
    align-items: center;
    width: 14px;
    padding: 4px 0;
    background: #ececec;
  }
  .vbar .thumb {
    flex: 1;
    width: 10px;
    margin: 42px 0 5px;
    border-radius: 5px;
    background: #bfbfbf;
  }
  .marker {
    position: absolute;
    border: 3px solid #fb2315;
    border-radius: 3px;
    pointer-events: none;
  }
  .bill-marker {
    top: 16px;
    right: 12px;
    left: -19px;
    height: 323px;
  }
  .hbar {
    display: flex;
    flex: none;
    align-items: center;
    height: 16px;
    padding-left: 5px;
    background: #e8e8e8;
    border-bottom: 2px solid #bfbfbf;
  }
  .hbar .track {
    flex: 1;
    padding: 0 5px;
  }
  .hbar .thumb {
    display: block;
    width: 85%;
    height: 10px;
    border-radius: 5px;
    background: #bfbfbf;
  }
  .hbar .corner {
    width: 14px;
    height: 14px;
    margin-left: 5px;
    background: #dcdcdc;
  }

  .detail-tabs {
    display: flex;
    flex: none;
    gap: 2px;
    height: 32px;
    padding: 6px 8px 0;
    border-bottom: 1px solid #bfbfbf;
  }
  .detail-tab {
    padding: 0 15px;
    border-radius: 3px 3px 0 0;
    background: #bfbfbf;
    white-space: nowrap;
  }
  .detail-tab.active {
    background: #4098ff;
    color: #fff;
    font-weight: 700;
  }
  .detail {
    display: flex;
    flex: 1;
    min-height: 0;
    background: #fff;
  }
  .works {
    flex: none;
    width: 333px;
    border-left: 1px solid #bfbfbf;
    border-right: 2px solid #bfbfbf;
  }
  .values {
    flex: 1;
    border-right: 2px solid #bfbfbf;
  }
  .w-index {
    width: 21px;
  }
  .w-work {
    width: 182px;
  }
  .w-out {
    width: 41px;
  }
  .w-name {
    width: 107px;
  }
  .w-value {
    width: 190px;
  }
  .current .focus {
    background: #fff;
    box-shadow: inset -1px -1px #7f7f7f;
  }
  .grid .current .editing {
    padding: 0;
    border: 2px solid #4098ff;
    background: #fff;
  }
  .picker {
    display: flex;
    align-items: center;
    padding-right: 4px;
  }
  .picker select {
    flex: 1;
  }
  .picker i {
    border: 5px solid transparent;
    border-top-color: #4a9cc4;
    border-bottom: 0;
  }
  .drawer {
    display: flex;
    flex: none;
    flex-direction: column;
    align-items: center;
    width: 22px;
    padding-top: 6px;
    border-right: 1px solid #ccc;
    background: #e8e8e8;
    color: #000;
  }
  .drawer span {
    width: 12px;
    margin-top: 8px;
  }

  .status {
    display: flex;
    flex: none;
    align-items: flex-start;
    height: 21px;
    overflow: hidden;
    line-height: 30px;
    white-space: nowrap;
  }
  .status span {
    padding: 0 28px 0 16px;
    background: linear-gradient(#9a9a9a, #9a9a9a) right 8px / 1px 22px no-repeat;
  }
  .status .first {
    width: 49px;
    padding: 0;
  }
  .score {
    width: 80px;
    height: 17px;
    margin: 4px 0 0 26px;
    border-radius: 3px 3px 0 0;
    background: #4098ff;
    color: #fff;
    line-height: 20px;
  }
  .views {
    margin: 4px 18px 0 auto;
  }
  .percent {
    margin-right: 10px;
    font-weight: 400;
  }
  .status svg:last-child {
    margin: 3px 22px 0 0;
  }

  .gutter {
    display: flex;
    padding-top: 358px;
    overflow: hidden;
    background: #000;
  }
  .gutter i {
    flex: none;
    width: 72px;
    height: 72px;
    margin-left: -62px;
    border-radius: 50%;
    background: #4a69a8;
    box-shadow: inset 0 0 5px #1c2f5c;
  }

  /* spreadsheet */
  .office {
    position: relative;
    display: flex;
    flex-direction: column;
    min-width: 0;
    height: 100vh;
    border-right: 2px solid #000;
    background: #e3e3e3;
  }
  .overlay {
    position: absolute;
    top: 0;
    left: 140px;
    z-index: 1;
    display: flex;
    align-items: flex-start;
  }
  .green-tab {
    width: 26px;
    height: 2px;
    background: #0b8457;
  }
  .speed {
    margin-left: 234px;
  }
  .ribbon {
    display: flex;
    flex: none;
    height: 74px;
    margin: 8px 13px 0;
    padding: 4px 10px 4px 17px;
    border-radius: 7px;
    background: #fff;
    box-shadow: 0 1px 2px #aaa;
  }
  .clip {
    position: relative;
    display: flex;
    align-items: flex-start;
    gap: 12px;
    width: 138px;
    border-right: 1px solid #d5d5d5;
  }
  .launch {
    position: absolute;
    right: 4px;
    bottom: 0;
  }
  .big {
    display: flex;
    flex-direction: column;
    align-items: center;
    gap: 6px;
    width: 36px;
    padding-top: 9px;
    white-space: nowrap;
  }
  .big span {
    display: flex;
    align-items: center;
    gap: 3px;
    line-height: 18px;
  }
  .soft {
    color: #aaa;
  }
  .pair {
    display: flex;
    flex-direction: column;
    gap: 10px;
    padding-top: 9px;
    margin-left: -4px;
  }
  .pair button {
    display: flex;
    align-items: center;
    gap: 5px;
  }
  .font {
    position: relative;
    width: 289px;
    padding: 6px 0 0 8px;
    border-right: 1px solid #d5d5d5;
  }
  .line {
    display: flex;
    height: 24px;
    margin-bottom: 4px;
  }
  .combo {
    display: grid;
    width: 153px;
    border: 1px solid #bbb;
    border-radius: 3px 0 0 3px;
  }
  .combo.size {
    width: 62px;
    margin-left: -1px;
    border-radius: 0 3px 3px 0;
  }
  .combo > select {
    grid-area: 1 / 1;
    padding-left: 11px;
  }
  .combo > :global(svg) {
    grid-area: 1 / 1;
    align-self: center;
    justify-self: end;
    margin-right: 5px;
  }
  .step {
    display: grid;
    place-items: center;
    width: 28px;
  }
  .glyph {
    display: grid;
    place-items: center;
    width: 28px;
  }
  .bold {
    margin-left: -2px;
    font: 700 15px/24px "Open Sans", sans-serif;
  }
  .split {
    display: flex;
    align-items: center;
    width: 40px;
  }
  .align {
    padding: 6px 0 0 8px;
  }
  .align .line {
    gap: 4px;
  }
  .align button {
    display: grid;
    place-items: center;
    width: 24px;
    border-radius: 4px;
  }
  .align .on {
    background: #e6e6e6;
  }
  .next {
    display: grid;
    place-items: center;
    width: 19px;
    margin-left: auto;
    border-radius: 5px;
    background: #ececec;
  }

  .book {
    display: flex;
    flex: 1;
    min-height: 0;
  }
  .book-main {
    display: flex;
    flex: 1;
    flex-direction: column;
    min-width: 0;
  }
  .formula-row {
    display: flex;
    gap: 9px;
    padding: 7px 13px 8px;
  }
  .name-box,
  .formula {
    display: flex;
    align-items: center;
    height: 28px;
    border: 1px solid #ccc;
    border-radius: 4px;
    background: #fff;
    font-feature-settings: "hwid" 1;
  }
  .name-box {
    width: 162px;
    padding-right: 6px;
  }
  .name-box input {
    flex: 1;
    min-width: 0;
    font-size: 14px;
    text-align: center;
  }
  .formula {
    flex: 1;
    min-width: 0;
    padding-left: 22px;
  }
  .formula em {
    margin: 0 12px 0 14px;
    font: italic 17px/20px "Liberation Serif", serif;
  }
  .formula input {
    flex: 1;
    min-width: 0;
    height: 20px;
    padding-left: 8px;
    border-left: 1px solid #ccc;
    color: #000;
    font-size: 15px;
  }
  .sheet-wrap {
    position: relative;
    display: flex;
    flex: 1;
    min-height: 0;
  }
  .sheet-view {
    flex: 1;
    min-width: 0;
    overflow: hidden;
    background: #fff;
  }
  .sheet {
    width: 100%;
    border-spacing: 0;
    table-layout: fixed;
    color: #000;
    font-feature-settings: "hwid" 1;
    white-space: nowrap;
  }
  .c-head {
    width: 32px;
  }
  .c-a {
    width: 120px;
  }
  .c-b {
    width: 101px;
  }
  .c-c {
    width: 113px;
  }
  .c-d {
    width: 125px;
  }
  .sheet th {
    padding: 0;
    background: #ededed;
    border-right: 1px solid #dcdcdc;
    border-bottom: 1px solid #dcdcdc;
    color: #555;
    font: 14px/16px "Noto Sans", sans-serif;
    font-feature-settings: normal;
  }
  .sheet thead th {
    height: 23px;
  }
  .sheet thead .picked {
    border-bottom: 2px solid #3f9220;
  }
  .sheet .picked {
    background: #dadada;
    color: #0b8457;
  }
  .all i {
    display: block;
    margin-left: 13px;
    border: solid transparent;
    border-width: 0 0 7px 7px;
    border-bottom-color: #666;
    width: 0;
  }
  .sheet tbody tr {
    height: 19px;
  }
  .sheet tbody .spare {
    height: 20px;
  }
  .sheet td {
    padding: 0 2px;
    border-right: 1px solid #e3e3e3;
    border-bottom: 1px solid #e3e3e3;
  }
  .sheet td:last-child {
    border-right: 0;
  }
  .sheet .data {
    border-right: 1px solid #000;
    border-bottom: 1px solid #000;
  }
  .sheet .edge {
    border-right-width: 2px;
  }
  .sheet .last .data {
    border-bottom-width: 2px;
  }
  .sheet .title .data {
    background: #ebebeb;
    text-align: center;
  }
  .sheet .num {
    text-align: right;
  }
  .sheet .yellow {
    background: #ff0;
  }
  .sheet .cursor {
    position: relative;
    outline: 3px solid #3f9220;
    outline-offset: -2px;
  }
  .sheet .cursor::after {
    content: "";
    position: absolute;
    right: -3px;
    bottom: -3px;
    width: 6px;
    height: 6px;
    border: 1px solid #fff;
    background: #3f9220;
  }
  .sheet-bar {
    display: flex;
    flex-direction: column;
    align-items: center;
    width: 17px;
    padding: 31px 0 8px;
    border-left: 1px solid #ddd;
    background: #ececec;
  }
  .sheet-bar .thumb {
    flex: 1;
    width: 8px;
    margin: 10px 0 30px;
    border-radius: 4px;
    background: #c9c9c9;
  }
  .sheet-bar .dash {
    width: 8px;
    height: 2px;
    margin-bottom: 9px;
    background: #aaa;
  }
  .sheet-marker {
    top: 220px;
    left: 25px;
    width: 132px;
    height: 121px;
  }
  .watermark {
    position: absolute;
    right: 33px;
    bottom: 0;
    width: 196px;
    color: #b5b5b5;
    font: 15px/20px "Open Sans", "Noto Sans CJK SC", sans-serif;
    white-space: nowrap;
  }
  .watermark p:first-child {
    font-size: 20px;
    line-height: 28px;
  }
  .sheet-tabs {
    display: flex;
    flex: none;
    align-items: center;
    height: 26px;
    padding-left: 17px;
    border-bottom: 1px solid #ccc;
  }
  .sheet-tab {
    align-self: flex-start;
    height: 24px;
    padding: 0 12px;
    border-radius: 0 0 5px 5px;
    background: #fff;
    color: #0b8457;
    font-weight: 700;
    white-space: nowrap;
  }
  .dots {
    margin: 0 12px;
  }
  .sheet-scroll {
    display: flex;
    flex: 1;
    align-items: center;
    height: 10px;
    margin: 0 19px 0 34px;
    padding: 0 12px;
    border: solid #aaa;
    border-width: 0 1px;
  }
  .sheet-scroll .thumb {
    width: 83px;
    height: 9px;
    margin: 0 auto 0 9px;
    border-radius: 4px;
    background: #c9c9c9;
  }
  .rail {
    display: flex;
    flex: none;
    flex-direction: column;
    align-items: center;
    gap: 20px;
    width: 57px;
    border-left: 1px solid #ccc;
    color: #333;
  }
  .rail .dash {
    width: 13px;
    height: 2px;
    margin: 24px 0 0;
    background: #999;
  }
  .rail .soft {
    color: #999;
  }
  .office-status {
    display: flex;
    flex: none;
    align-items: flex-start;
    height: 12px;
    padding: 5px 16px 0 153px;
    overflow: hidden;
    border-top: 1px solid #ccc;
  }
  .office-status .bar {
    width: 1px;
    height: 12px;
    margin: 0 8px 0 16px;
    background: #aaa;
  }
  .office-status .view {
    display: grid;
    place-items: center;
    width: 24px;
    height: 20px;
    margin: -4px 8px 0 0;
  }
  .office-status .view + .bar {
    margin-left: 0;
  }
  .office-status .on {
    border-radius: 4px 4px 0 0;
    background: #ccc;
  }
  .office-status span {
    margin: -1px 12px 0 6px;
  }
  .office-status .zoom {
    margin: 0 30px 0 auto;
  }
</style>
